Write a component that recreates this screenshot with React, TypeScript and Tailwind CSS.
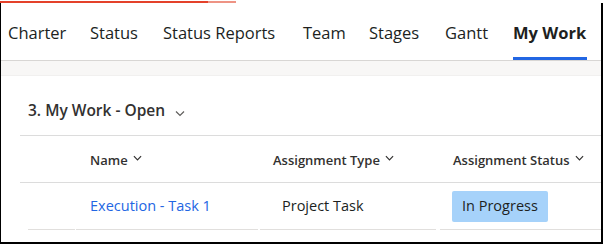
import React from 'react';

// tab widths picked to line up with the source layout
const tabs = [
  { label: 'Charter', w: 'w-[58px]' },
  { label: 'Status', w: 'w-[49px]' },
  { label: 'Status Reports', w: 'w-[116px]' },
  { label: 'Team', w: 'w-[42px]' },
  { label: 'Stages', w: 'w-[52px]' },
  { label: 'Gantt', w: 'w-[44px]' },
  { label: 'My Work', w: 'w-[74px]' },
];

const Chevron: React.FC<{ className?: string }> = ({ className }) => (
  <svg viewBox="0 0 12 12" className={className} fill="none" stroke="currentColor" strokeWidth="1.2">
    <path d="M2 4.5 6 8.5 10 4.5" />
  </svg>
);

const SortCaret: React.FC = () => (
  <svg viewBox="0 0 10 6" className="w-[9px] h-[6px] mb-[6px]" fill="none" stroke="currentColor" strokeWidth="1.3">
    <path d="M1 1 5 5 9 1" />
  </svg>
);

const App: React.FC = () => {
  const active = 'My Work';

  return (
    <div className="w-[603px] h-[244px] overflow-hidden bg-white font-['Open_Sans',sans-serif] text-[#323130]">
      <div className="flex h-[3px] pt-[1px]">
        <div className="w-[208px] bg-[#e4412a]" />
        <div className="w-[28px] bg-[#ee9384]" />
      </div>
      <div className="h-[241px] flex flex-col border-l border-r-2 border-b-2 border-black">
        {/* tab bar */}
        <div className="flex gap-6 pl-[7px] h-[58px] border-b border-[#d8d6d4]">
          {tabs.map((t) => (
            <div
              key={t.label}
              className={
                'flex items-center whitespace-nowrap text-[16.5px] border-b-[3px] pt-[6px] ' +
                t.w +
                ' ' +
                (t.label === active ? 'border-[#2266e3] font-bold text-[#201f1e]' : 'border-transparent text-[#201f1e]')
              }
            >
              {t.label}
            </div>
          ))}
        </div>
        <div className="h-[15px] bg-[#f8f7f6] border-b border-[#f1f0ef]" />

        {/* card */}
        <div className="flex-1 bg-white">
          <div className="flex items-center gap-[9px] pl-[27px] h-[59px] pt-[10px]">
            <span className="text-[15.5px] font-semibold">3. My Work - Open</span>
            <Chevron className="w-[12px] h-[12px] mt-[4px] text-[#605e5c]" />
          </div>

          <div className="ml-[19px] border-t border-[#dcdcdc]">
            <div className="grid grid-cols-[56px_184px_180px_1fr] h-[47px] pt-[3px] border-b border-[#dcdcdc] text-[13px] font-semibold">
              <div />
              <div className="flex items-center gap-[5px] pl-[14px]">
                Name <SortCaret />
              </div>
              <div className="flex items-center gap-[5px] pl-[13px]">
                Assignment Type <SortCaret />
              </div>
              <div className="flex items-center gap-[5px] pl-[13px]">
                Assignment Status <SortCaret />
              </div>
            </div>

            <div className="grid grid-cols-[56px_184px_180px_1fr] h-[47px] text-[14.5px]">
              <div className="ml-2 mr-[1px] border-b border-[#e1dfdd]" />
              <div className="flex items-center pl-[14px] mr-[2px] border-b border-[#e1dfdd] text-[#2266e3]">
                Execution - Task 1
              </div>
              <div className="flex items-center pl-[22px] mr-[4px] border-b border-[#e1dfdd] text-[#201f1e]">
                Project Task
              </div>
              <div className="flex items-center pl-[12px] border-b border-[#e1dfdd]">
                <span className="flex items-center h-[31px] bg-[#a6d2fa] rounded-[2px] px-[10px] text-[#201f1e]">
                  In Progress
                </span>
              </div>
            </div>
          </div>
        </div>
      </div>
    </div>
  );
};

export default App;
